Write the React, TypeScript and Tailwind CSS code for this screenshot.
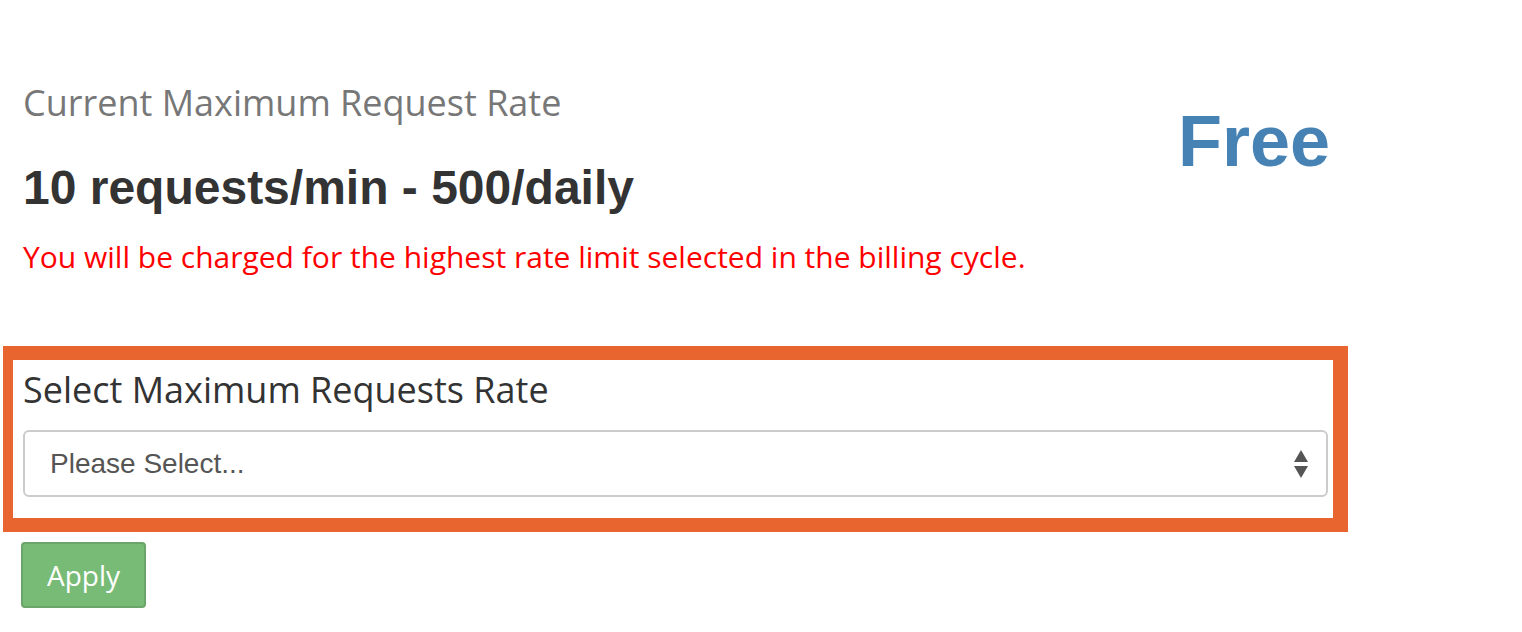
import React from "react";

export default function App() {
  return (
    <div className="w-[1522px] h-[632px] bg-white overflow-hidden">
      <div className="pt-[78px] pl-[23px] flex">
        <div className="w-[1155px]">
          <div className="font-['Open_Sans',sans-serif] text-[36px] leading-[50px] text-[#777777]">
            Current Maximum Request Rate
          </div>
          <div className="mt-[32px] font-['Liberation_Sans',Arial,sans-serif] text-[48px] leading-[56px] font-bold text-[#333333]">
            10 requests/min - 500/daily
          </div>
          <div className="mt-[21px] font-['Open_Sans',sans-serif] text-[30px] leading-[40px] text-[#ff0000]">
            You will be charged for the highest rate limit selected in the billing cycle.
          </div>
        </div>
        <div className="pt-[23px] font-['Liberation_Sans',Arial,sans-serif] text-[72px] leading-[80px] font-bold text-[#4682b4]">
          Free
        </div>
      </div>
      <div className="mt-[69px] ml-[3px] w-[1345px] h-[186px] border-t-[14px] border-b-[14px] border-l-[10px] border-r-[15px] border-[#e8652f] bg-white pl-[10px] pr-[5px]">
        <div className="pt-[8px] font-['Open_Sans',sans-serif] text-[36px] leading-[44px] text-[#333333]">
          Select Maximum Requests Rate
        </div>
        <div className="mt-[18px] h-[67px] border-2 border-[#cccccc] rounded-[6px] flex items-center justify-between pl-[25px] pr-[17px]">
          <span className="font-['Liberation_Sans',Arial,sans-serif] text-[28px] text-[#555555]">
            Please Select...
          </span>
          <svg width="16" height="34" viewBox="0 0 16 34">
            <polygon points="8,3 15,15 1,15" fill="#555555" />
            <polygon points="1,19 15,19 8,31" fill="#555555" />
          </svg>
        </div>
      </div>
      <div className="mt-[10px] ml-[21px]">
        <button className="w-[125px] h-[66px] bg-[#77bb77] border-2 border-[#6aa66a] rounded-[4px] text-white font-['Open_Sans',sans-serif] text-[28px]">
          Apply
        </button>
      </div>
    </div>
  );
}
